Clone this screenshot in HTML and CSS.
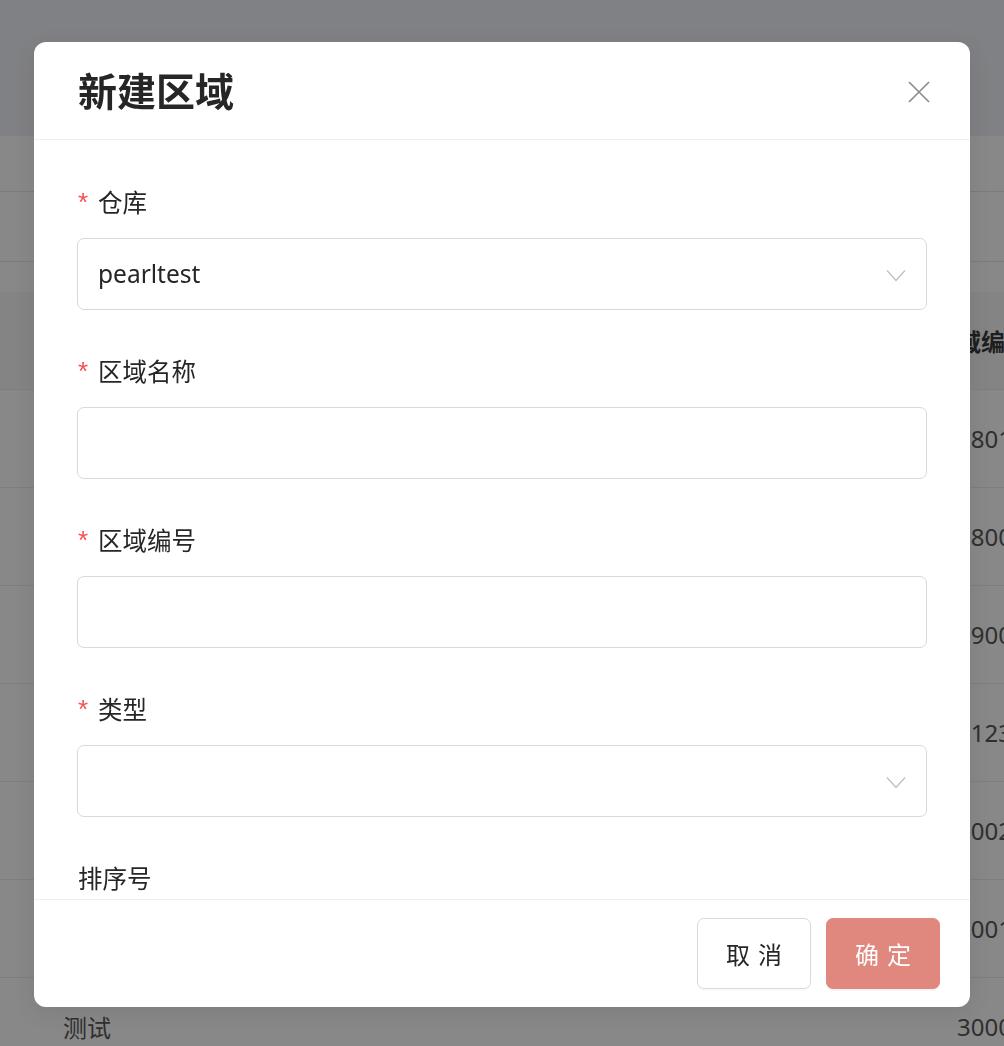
FILE: index.html
```html
<!DOCTYPE html>
<html lang="zh-CN">
<head>
<meta charset="utf-8">
<title>新建区域</title>
<link rel="stylesheet" href="styles.css">
</head>
<body>
<div class="page">
  <div class="topbar"></div>
  <div class="filter-row r1"></div>
  <div class="filter-row r2"></div>
  <div class="filter-row r3"></div>
  <div class="table">
    <div class="thead">
      <div class="th-name"></div>
      <div class="th-code">区域编号</div>
    </div>
    <div class="tr"><div class="td-name"></div><div class="td-code">1801</div></div>
    <div class="tr"><div class="td-name"></div><div class="td-code">1800</div></div>
    <div class="tr"><div class="td-name"></div><div class="td-code">1900</div></div>
    <div class="tr"><div class="td-name"></div><div class="td-code">0123</div></div>
    <div class="tr"><div class="td-name"></div><div class="td-code">3002</div></div>
    <div class="tr"><div class="td-name"></div><div class="td-code">3001</div></div>
    <div class="tr"><div class="td-name">测试</div><div class="td-code">3000</div></div>
  </div>
</div>

<div class="modal">
  <div class="modal-header">
    <div class="modal-title">新建区域</div>
    <button class="modal-close" aria-label="关闭">
      <svg width="22" height="22" viewBox="0 0 22 22"><path d="M1 1 L21 21 M21 1 L1 21" stroke="#8c8c8c" stroke-width="1.7" fill="none"/></svg>
    </button>
  </div>
  <div class="modal-body">
    <div class="form-item">
      <div class="form-label"><span class="req">*</span>仓库</div>
      <div class="field select">
        <span class="field-value">pearltest</span>
        <svg class="chevron" width="20" height="13" viewBox="0 0 20 13"><polyline points="1,1.5 10,11.5 19,1.5" stroke="#bfbfbf" stroke-width="1.3" fill="none"/></svg>
      </div>
    </div>
    <div class="form-item">
      <div class="form-label"><span class="req">*</span>区域名称</div>
      <div class="field"></div>
    </div>
    <div class="form-item">
      <div class="form-label"><span class="req">*</span>区域编号</div>
      <div class="field"></div>
    </div>
    <div class="form-item">
      <div class="form-label"><span class="req">*</span>类型</div>
      <div class="field select">
        <span class="field-value"></span>
        <svg class="chevron" width="20" height="13" viewBox="0 0 20 13"><polyline points="1,1.5 10,11.5 19,1.5" stroke="#bfbfbf" stroke-width="1.3" fill="none"/></svg>
      </div>
    </div>
    <div class="form-item">
      <div class="form-label">排序号</div>
      <div class="field"></div>
    </div>
  </div>
  <div class="modal-footer">
    <button class="btn btn-default"><span>取消</span></button>
    <button class="btn btn-primary"><span>确定</span></button>
  </div>
</div>
</body>
</html>
```

FILE: styles.css
```css
html, body {
  margin: 0;
  padding: 0;
}
body {
  width: 1004px;
  height: 1046px;
  overflow: hidden;
  background: #888888;
  font-family: "Noto Sans", "Noto Sans CJK SC", sans-serif;
  font-size: 24px;
  color: #262626;
}
.page {
  width: 1004px;
}
.topbar {
  height: 136px;
  background: #808184;
}
.filter-row {
  background: #888888;
}
.r1 {
  height: 55px;
  border-bottom: 1px solid #7b7b7b;
}
.r2 {
  height: 69px;
  border-bottom: 1px solid #7b7b7b;
}
.r3 {
  height: 30px;
}
.thead {
  display: grid;
  grid-template-columns: 1fr 71px;
  height: 97px;
  align-items: center;
  background: #848484;
  border-bottom: 1px solid #7e7e7e;
  font-weight: 700;
  color: #1e1e1e;
  white-space: nowrap;
  overflow: hidden;
}
.tr {
  display: grid;
  grid-template-columns: 1fr 47px;
  height: 97px;
  align-items: center;
  border-bottom: 1px solid #7e7e7e;
  color: #2f2f2f;
  white-space: nowrap;
  overflow: hidden;
}
.td-name {
  padding-left: 63px;
}
.td-code, .th-code {
  overflow: hidden;
}

/* modal */
.modal {
  position: fixed;
  top: 42px;
  left: 34px;
  width: 936px;
  height: 965px;
  background: #ffffff;
  border-radius: 12px;
  display: flex;
  flex-direction: column;
  overflow: hidden;
  box-shadow: 0 6px 24px rgba(0, 0, 0, 0.08);
}
.modal-header {
  height: 97px;
  flex: none;
  display: flex;
  align-items: center;
  justify-content: space-between;
  padding: 0 40px 0 44px;
  border-bottom: 1px solid #efefef;
}
.modal-title {
  font-family: "Noto Sans CJK SC", sans-serif;
  font-size: 39px;
  font-weight: 700;
  color: #262626;
  line-height: 1;
  margin-top: -2px;
}
.modal-close {
  border: 0;
  background: transparent;
  padding: 0;
  width: 22px;
  height: 22px;
  display: flex;
  margin-top: 2px;
}
.modal-body {
  flex: 1;
  overflow: hidden;
  padding: 37px 43px 0 43px;
}
.form-item {
  margin-bottom: 36px;
}
.form-label {
  height: 50px;
  line-height: 50px;
  margin-bottom: 11px;
  padding-left: 1px;
  font-family: "Noto Sans CJK SC", sans-serif;
  font-size: 24.5px;
  color: #262626;
  display: flex;
  align-items: center;
}
.req {
  color: #f5504f;
  font-family: "Liberation Sans", sans-serif;
  font-size: 26px;
  width: 20px;
  line-height: 1;
  margin-top: -1px;
}
.field {
  height: 70px;
  border: 1px solid #d9d9d9;
  border-radius: 7px;
  display: flex;
  align-items: center;
  padding: 0 20px 0 20px;
  background: #fff;
}
.field-value {
  flex: 1;
  font-family: "Noto Sans", sans-serif;
  font-size: 24.5px;
  color: #262626;
  margin-top: -1px;
}
.chevron {
  flex: none;
  margin-top: 2px;
}
.modal-footer {
  flex: none;
  height: 108px;
  border-top: 1px solid #efefef;
  display: flex;
  justify-content: flex-end;
  align-items: flex-start;
  gap: 15px;
  padding: 18px 30px 0 0;
  box-sizing: border-box;
}
.btn {
  width: 114px;
  height: 71px;
  border-radius: 7px;
  font-family: "Noto Sans CJK SC", sans-serif;
  font-size: 24px;
  cursor: pointer;
  display: flex;
  align-items: center;
  justify-content: center;
  padding: 0;
}
.btn span {
  letter-spacing: 8px;
  margin-right: -8px;
}
.btn-default {
  background: #ffffff;
  border: 1px solid #d9d9d9;
  color: #262626;
  box-shadow: 0 2px 0 rgba(0, 0, 0, 0.02);
}
.btn-primary {
  background: #e0877e;
  border: 1px solid #e0877e;
  color: #ffffff;
  box-shadow: 0 2px 0 rgba(0, 0, 0, 0.045);
}
```
